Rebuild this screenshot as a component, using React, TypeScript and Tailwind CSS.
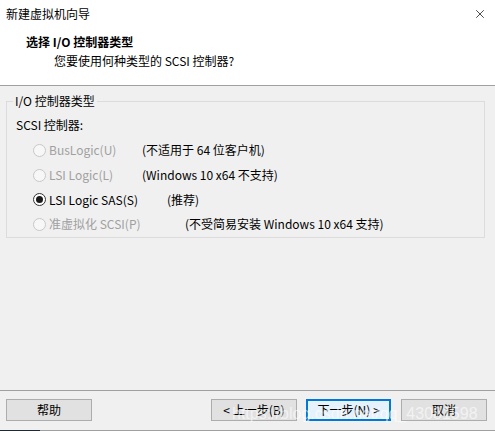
import { X } from "lucide-react";

type Row = {
  label: string;
  note: string;
  checked?: boolean;
  disabled?: boolean;
  labelW: string;
};

const rows: Row[] = [
  { label: "BusLogic(U)", note: "(不适用于 64 位客户机)", disabled: true, labelW: "w-[109px]" },
  { label: "LSI Logic(L)", note: "(Windows 10 x64 不支持)", disabled: true, labelW: "w-[109px]" },
  { label: "LSI Logic SAS(S)", note: "(推荐)", checked: true, labelW: "w-[134px]" },
  { label: "准虚拟化 SCSI(P)", note: "(不受简易安装 Windows 10 x64 支持)", disabled: true, labelW: "w-[152px]" },
];

function Radio({ checked, disabled }: { checked?: boolean; disabled?: boolean }) {
  return (
    <span
      className={
        disabled
          ? "w-[13px] h-[13px] rounded-full border border-[#c8c8c8] bg-[#f7f7f7] shrink-0"
          : "w-[13px] h-[13px] rounded-full border border-[#333333] bg-white shrink-0 flex items-center justify-center"
      }
    >
      {checked && <span className="w-[7px] h-[7px] rounded-full bg-[#1a1a1a]" />}
    </span>
  );
}

function Btn({ children, primary }: { children: React.ReactNode; primary?: boolean }) {
  return (
    <button
      className={
        primary
          ? "w-[85px] h-[22px] bg-[#e5f1fb] border-2 border-[#0078d7] text-[12px] leading-none text-black"
          : "w-[86px] h-[22px] bg-[#e1e1e1] border border-[#adadad] text-[12px] leading-none text-black"
      }
    >
      {children}
    </button>
  );
}

export default function App() {
  return (
    <div className="relative w-[495px] h-[431px] bg-[#f0f0f0] flex flex-col overflow-hidden font-['Noto_Sans_CJK_SC','Noto_Sans',sans-serif] text-[12px] text-black">
      {/* 상단 헤더 */}
      <div className="h-[86px] bg-white border-b border-[#a0a0a0] flex flex-col">
        <div className="h-[28px] flex items-center justify-between pl-[6px] pr-[8px]">
          <span className="leading-none">新建虚拟机向导</span>
          <X size={14} strokeWidth={1.2} className="text-black" />
        </div>
        <div className="pl-[26px] pt-[7px] font-bold leading-[14px]">选择 I/O 控制器类型</div>
        <div className="pl-[54px] pt-[5px] leading-[14px]">您要使用何种类型的 SCSI 控制器?</div>
      </div>

      {/* 그룹 박스 */}
      <div className="relative mt-[15px] ml-[6px] mr-[10px] h-[137px] border border-[#dcdcdc]">
        <span className="absolute left-[6px] top-[-8px] px-[2px] bg-[#f0f0f0] leading-[14px]">I/O 控制器类型</span>
        <div className="pl-[9px] pt-[16px] leading-[14px]">SCSI 控制器:</div>
        <div className="flex flex-col pt-[6px]">
          {rows.map((r) => (
            <div key={r.label} className="h-[24.7px] flex items-center pl-[26px]">
              <div className={`${r.labelW} flex items-center gap-[3px]`}>
                <Radio checked={r.checked} disabled={r.disabled} />
                <span className={r.disabled ? "text-[#a0a0a0]" : "text-black"}>{r.label}</span>
              </div>
              <span>{r.note}</span>
            </div>
          ))}
        </div>
      </div>

      <div className="flex-1" />

      {/* 하단 버튼 */}
      <div className="h-[40px] border-t border-[#a0a0a0] flex items-start pt-[8px] pl-[6px] pr-[8px]">
        <Btn>帮助</Btn>
        <div className="flex-1" />
        <Btn>&lt; 上一步(B)</Btn>
        <div className="w-[9px]" />
        <Btn primary>下一步(N) &gt;</Btn>
        <div className="w-[10px]" />
        <Btn>取消</Btn>
      </div>
      <div className="h-[1px] bg-[#a0a0a0] flex">
        <div className="w-[40px] bg-[#1f2a33]" />
      </div>

      {/* 워터마크 */}
      <span className="absolute left-[232px] top-[402px] pointer-events-none font-['Liberation_Sans',sans-serif] text-[16px] text-white/60 whitespace-nowrap">
        https://blog.csdn.net/qq_43081598
      </span>
    </div>
  );
}
